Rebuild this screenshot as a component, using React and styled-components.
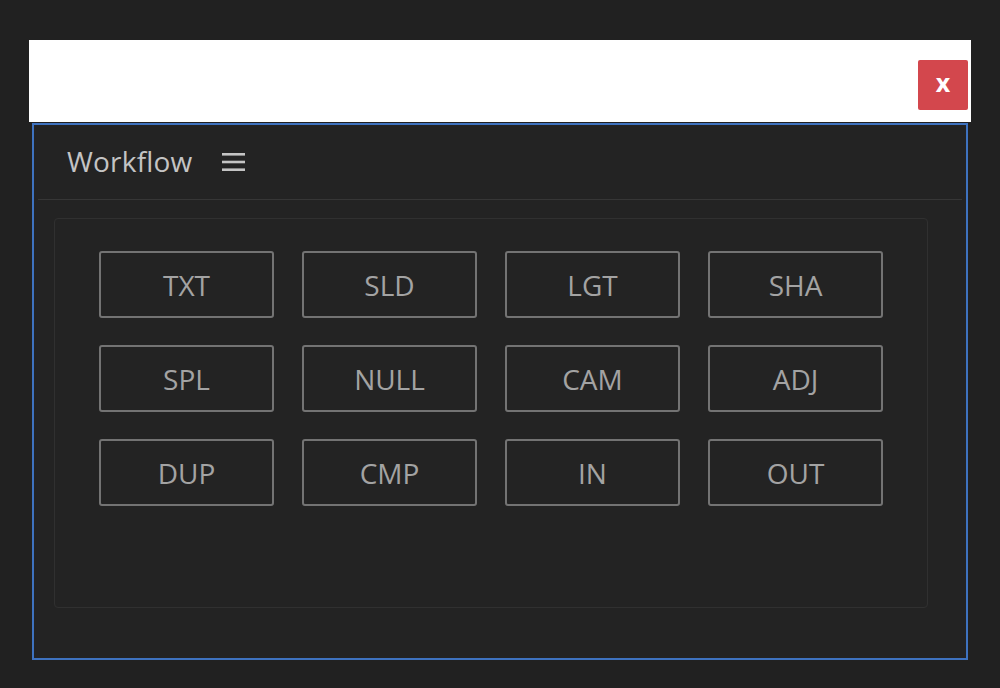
import React from "react";
import styled, { createGlobalStyle } from "styled-components";

const GlobalStyle = createGlobalStyle`
  html, body {
    margin: 0;
    padding: 0;
    background: #212121;
  }
  body {
    font-family: "Open Sans", "Noto Sans", sans-serif;
  }
`;

const Page = styled.div`
  width: 1000px;
  height: 688px;
  padding: 40px 29px 0;
  box-sizing: border-box;
  overflow: hidden;
`;

const Window = styled.div`
  display: flex;
  flex-direction: column;
  width: 942px;
`;

const TitleBar = styled.div`
  height: 82px;
  background: #ffffff;
  display: flex;
  justify-content: flex-end;
  align-items: flex-start;
  padding: 20px 3px 0 0;
  box-sizing: border-box;
`;

const CloseButton = styled.button`
  width: 50px;
  height: 50px;
  border: none;
  border-radius: 2px;
  background: #d3474d;
  color: #ffffff;
  font-family: "Open Sans", sans-serif;
  font-size: 25px;
  font-weight: 700;
  line-height: 1;
  display: flex;
  align-items: center;
  justify-content: center;
  padding: 0 0 5px;
  cursor: pointer;
`;

const Panel = styled.div`
  margin: 1px 3px 0;
  height: 537px;
  border: 2px solid #3e72bf;
  background: #232323;
  box-sizing: border-box;
  display: flex;
  flex-direction: column;
`;

const Header = styled.div`
  height: 75px;
  display: flex;
  align-items: center;
  gap: 30px;
  padding: 0 0 3px 29px;
  box-sizing: border-box;
  border-bottom: 1px solid #363636;
  margin: 0 4px;
`;

const Title = styled.span`
  font-size: 28px;
  color: #c4c4c4;
  letter-spacing: 0.2px;
`;

const MenuIcon = styled.svg`
  width: 24px;
  height: 20px;
  display: block;
  margin-top: 2px;
`;

const Body = styled.div`
  flex: 1;
  padding: 18px 38px 50px 20px;
  display: flex;
`;

const ButtonArea = styled.div`
  flex: 1;
  border: 1px solid #303030;
  border-radius: 4px;
  padding: 32px 0 0 44px;
  display: grid;
  grid-template-columns: repeat(4, 175px);
  grid-auto-rows: 67px;
  column-gap: 28px;
  row-gap: 27px;
  align-content: start;
`;

const ToolButton = styled.button`
  border: 2px solid #737373;
  border-radius: 3px;
  background: transparent;
  color: #a3a3a3;
  font-family: "Open Sans", "Noto Sans", sans-serif;
  font-size: 28px;
  display: flex;
  align-items: center;
  justify-content: center;
  padding: 0;
  cursor: pointer;
`;

const tools = ["TXT", "SLD", "LGT", "SHA", "SPL", "NULL", "CAM", "ADJ", "DUP", "CMP", "IN", "OUT"];

export default function App() {
  return (
    <>
      <GlobalStyle />
      <Page>
        <Window>
          <TitleBar>
            <CloseButton>x</CloseButton>
          </TitleBar>
          <Panel>
            <Header>
              <Title>Workflow</Title>
              <MenuIcon viewBox="0 0 24 20">
                <rect x="0" y="1" width="23" height="2.6" fill="#c4c4c4" />
                <rect x="0" y="8.7" width="23" height="2.6" fill="#c4c4c4" />
                <rect x="0" y="16.4" width="23" height="2.6" fill="#c4c4c4" />
              </MenuIcon>
            </Header>
            <Body>
              <ButtonArea>
                {tools.map((t) => (
                  <ToolButton key={t}>{t}</ToolButton>
                ))}
              </ButtonArea>
            </Body>
          </Panel>
        </Window>
      </Page>
    </>
  );
}
